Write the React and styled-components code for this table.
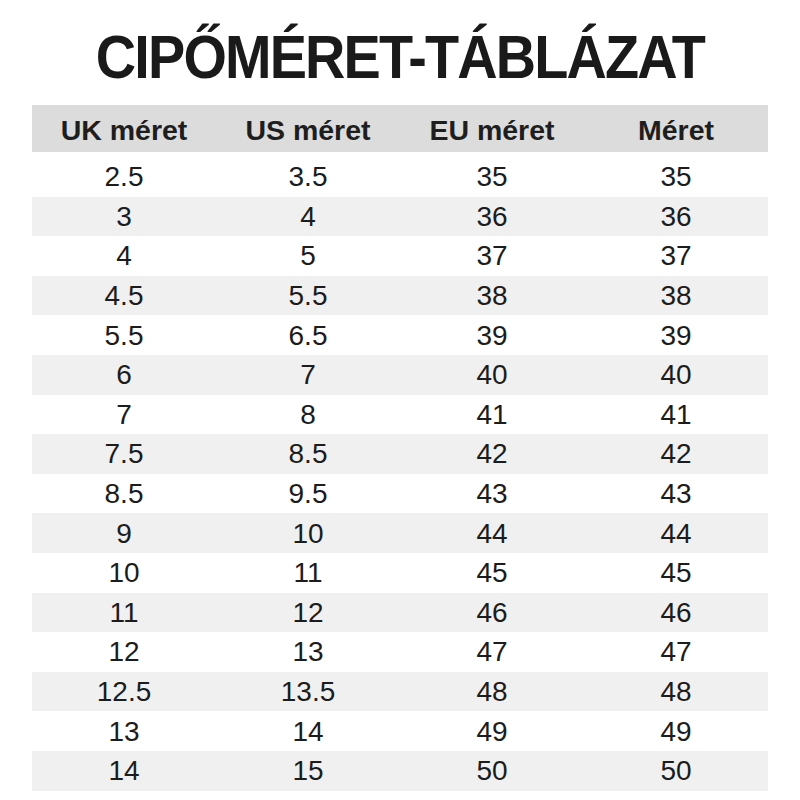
import React from "react";
import styled, { createGlobalStyle } from "styled-components";

// cipőméret adatok: UK, US, EU, méret
const rows = [
  ["2.5", "3.5", "35", "35"],
  ["3", "4", "36", "36"],
  ["4", "5", "37", "37"],
  ["4.5", "5.5", "38", "38"],
  ["5.5", "6.5", "39", "39"],
  ["6", "7", "40", "40"],
  ["7", "8", "41", "41"],
  ["7.5", "8.5", "42", "42"],
  ["8.5", "9.5", "43", "43"],
  ["9", "10", "44", "44"],
  ["10", "11", "45", "45"],
  ["11", "12", "46", "46"],
  ["12", "13", "47", "47"],
  ["12.5", "13.5", "48", "48"],
  ["13", "14", "49", "49"],
  ["14", "15", "50", "50"],
];

const headers = ["UK méret", "US méret", "EU méret", "Méret"];

const GlobalStyle = createGlobalStyle`
  body {
    margin: 0;
    background: #ffffff;
    font-family: "Liberation Sans", Arial, sans-serif;
    color: #1c1c1c;
  }
`;

const SizeChart = () => {
  return (
    <Page>
      <GlobalStyle />
      <Title>CIPŐMÉRET-TÁBLÁZAT</Title>
      <Table>
        <HeaderRow>
          {headers.map((h) => (
            <HeadCell key={h}>{h}</HeadCell>
          ))}
        </HeaderRow>
        <Body>
          {rows.map((row, i) => (
            <Row key={i} $shaded={i % 2 === 1}>
              {row.map((value, j) => (
                <Cell key={j}>{value}</Cell>
              ))}
            </Row>
          ))}
        </Body>
      </Table>
    </Page>
  );
};

const Page = styled.div`
  width: 800px;
  height: 800px;
  padding-top: 27px;
  box-sizing: border-box;
  display: flex;
  flex-direction: column;
  align-items: center;
`;

const Title = styled.h1`
  margin: 0;
  font-size: 62px;
  line-height: 60px;
  font-weight: bold;
  letter-spacing: -2px;
  color: #1a1a1a;
  text-align: center;
  white-space: nowrap;
  transform: scaleX(0.9);
  transform-origin: center;
`;

const Table = styled.div`
  width: 736px;
  margin-top: 18px;
`;

const HeaderRow = styled.div`
  display: grid;
  grid-template-columns: repeat(4, 1fr);
  height: 47px;
  background-color: #dcdcdc;
`;

const HeadCell = styled.div`
  display: flex;
  align-items: center;
  justify-content: center;
  padding-top: 4px;
  font-size: 28.5px;
  font-weight: bold;
  color: #1e1e1e;
`;

const Body = styled.div`
  margin-top: 5px;
`;

const Row = styled.div`
  display: grid;
  grid-template-columns: repeat(4, 1fr);
  height: 39.6px;
  background-color: ${(p) => (p.$shaded ? "#f0f0f0" : "#ffffff")};
`;

const Cell = styled.div`
  display: flex;
  align-items: center;
  justify-content: center;
  padding-top: 1px;
  font-size: 28px;
  color: #1c1c1c;
`;

export default SizeChart;
